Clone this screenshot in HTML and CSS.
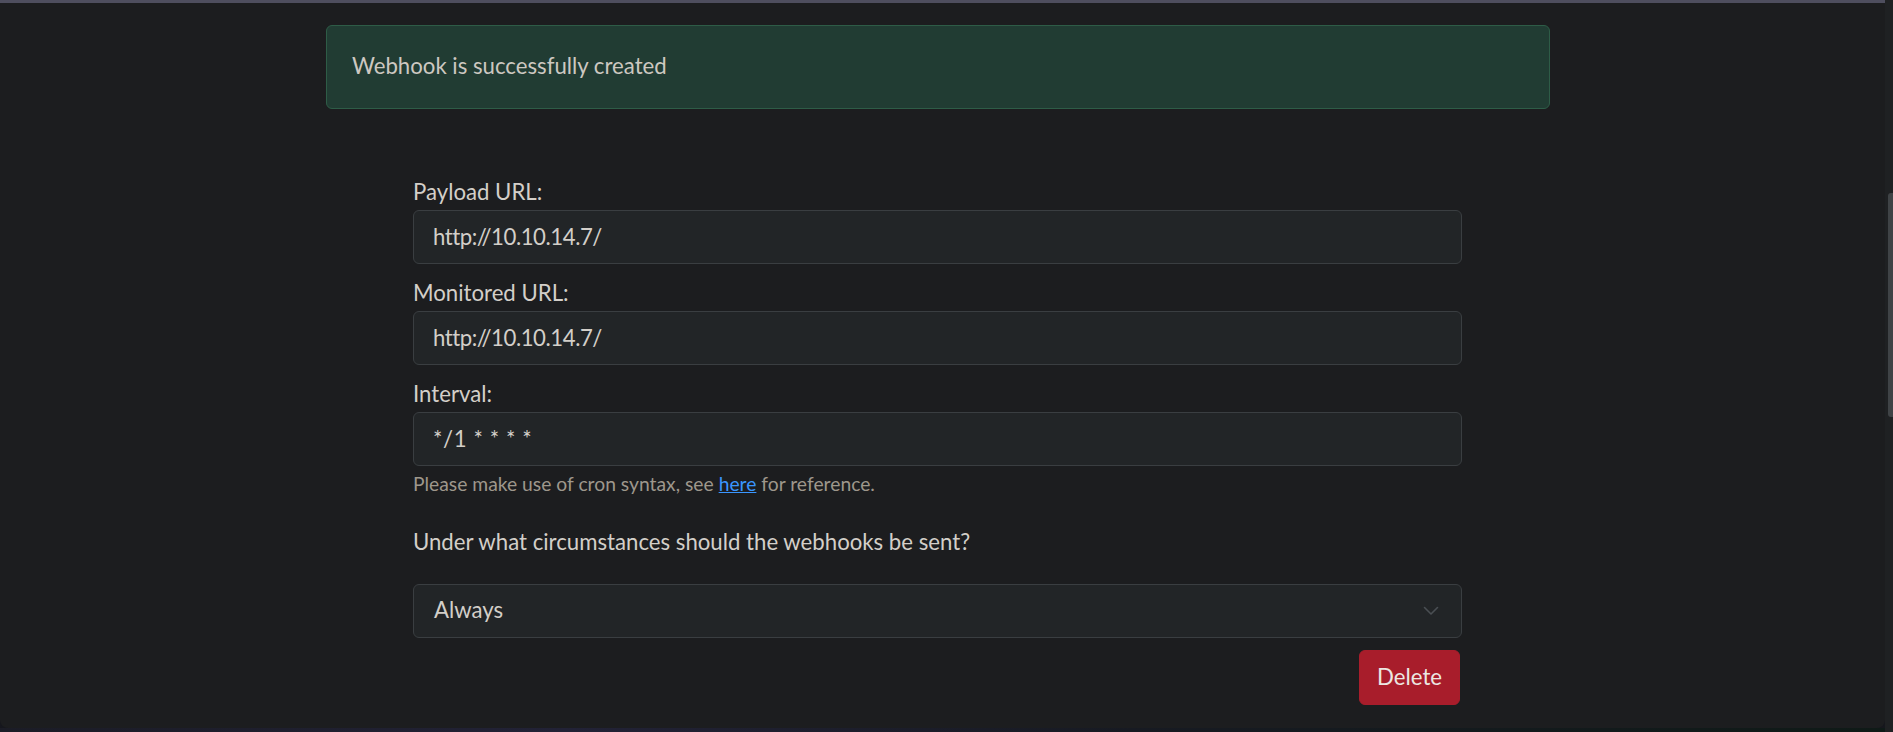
FILE: index.html
```html
<!DOCTYPE html>
<html lang="en">
<head>
<meta charset="utf-8">
<title>Webhook</title>
<link rel="stylesheet" href="styles.css">
</head>
<body>
<div class="page">
  <div class="topbar"></div>
  <main class="card">
    <div class="alert">Webhook is successfully created</div>
    <form class="form">
      <div class="group">
        <label class="label">Payload URL:</label>
        <input class="control control-url" type="text" value="http://10.10.14.7/">
      </div>
      <div class="group">
        <label class="label">Monitored URL:</label>
        <input class="control control-url" type="text" value="http://10.10.14.7/">
      </div>
      <div class="group">
        <label class="label">Interval:</label>
        <input class="control control-cron" type="text" value="*/1 * * * *">
        <small class="help">Please make use of cron syntax, see <a class="link" href="#">here</a> for reference.</small>
      </div>
      <p class="question">Under what circumstances should the webhooks be sent?</p>
      <div class="select">
        <span>Always</span>
        <svg class="chevron" width="16" height="10" viewBox="0 0 16 10"><path d="M1.5 1.5 L8 8 L14.5 1.5" fill="none" stroke="#4a4f53" stroke-width="1.6" stroke-linecap="round" stroke-linejoin="round"/></svg>
      </div>
      <div class="actions">
        <button class="btn-danger" type="button">Delete</button>
      </div>
    </form>
  </main>
  <div class="below"></div>
</div>
<div class="scrollbar"><div class="thumb"></div></div>
</body>
</html>
```
FILE: styles.css
```css
html, body {
  margin: 0;
  padding: 0;
  height: 732px;
  overflow: hidden;
}
body {
  display: flex;
  background: #16171d;
  font-family: "Lato", "Noto Sans", sans-serif;
  font-size: 22.2px;
  color: #d3cfc9;
}
.page {
  width: 1885px;
  display: flex;
  flex-direction: column;
}
.topbar {
  height: 3px;
  background: #4e4e5e;
}
.card {
  height: 725px;
  background: #1c1d1f;
  border-radius: 0 0 8px 8px;
  display: flex;
  flex-direction: column;
}
.below {
  flex: 1;
  background: linear-gradient(90deg, #1b1c26, #222236 30%, #171a22 60%, #0f1a17);
}
.scrollbar {
  width: 8px;
  background: #1f2123;
  display: flex;
  justify-content: flex-end;
}
.thumb {
  width: 5px;
  height: 224px;
  margin-top: 193px;
  background: #3f4346;
  border-radius: 3px 0 0 3px;
}
.alert {
  box-sizing: border-box;
  margin: 22px 0 0 326px;
  width: 1224px;
  height: 84px;
  padding: 0 25px 2px;
  display: flex;
  align-items: center;
  background: #213c33;
  border: 1px solid #2e5c47;
  border-radius: 6px;
  color: #cdc8c1;
  line-height: 30px;
}
.form {
  margin: 68px 0 0 413px;
  width: 1049px;
  display: flex;
  flex-direction: column;
}
.group {
  display: flex;
  flex-direction: column;
  margin-bottom: 14px;
}
.label {
  line-height: 30px;
  margin-bottom: 3px;
}
.control {
  box-sizing: border-box;
  height: 54px;
  padding: 0 19px 2px;
  margin: 0;
  background: #222527;
  border: 1px solid #3a3e41;
  border-radius: 6px;
  color: #d3cfc9;
  font: inherit;
  outline: none;
}
.control-url {
  letter-spacing: -0.45px;
}
.control-cron {
  letter-spacing: 0.6px;
}
.help {
  margin-top: 4px;
  font-size: 19.3px;
  line-height: 27px;
  color: #9e978c;
}
.link {
  color: #3a96ff;
  text-decoration: underline;
}
.question {
  margin: 16px 0 0;
  line-height: 30px;
}
.select {
  box-sizing: border-box;
  margin-top: 27px;
  height: 54px;
  padding: 0 22px 3px 20px;
  display: flex;
  align-items: center;
  justify-content: space-between;
  background: #222527;
  border: 1px solid #3a3e41;
  border-radius: 6px;
}
.chevron {
  margin-top: 2px;
}
.actions {
  display: flex;
  justify-content: flex-end;
  margin-top: 12px;
  padding-right: 2px;
}
.btn-danger {
  box-sizing: border-box;
  height: 55px;
  padding: 0 17px 3px;
  background: #a81d2b;
  border: 1px solid #a81d2b;
  border-radius: 6px;
  color: #ece7e2;
  font: inherit;
}
```
